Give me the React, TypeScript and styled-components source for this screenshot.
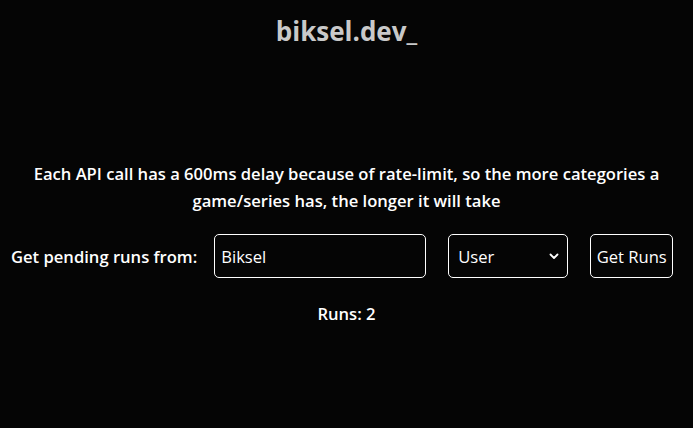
import React from "react";
import styled, { createGlobalStyle } from "styled-components";

const Global = createGlobalStyle`
  html, body { margin: 0; padding: 0; background: #050505; }
  body { font-family: "Open Sans", "Noto Sans", sans-serif; color: #ffffff; }
  * { box-sizing: border-box; }
`;

const Page = styled.div`
  width: 693px;
  height: 428px;
  background: #050505;
  display: flex;
  flex-direction: column;
  align-items: stretch;
`;

const Title = styled.h1`
  margin: 0;
  padding-top: 13px;
  height: 50px;
  text-align: center;
  font-size: 26px;
  font-weight: 700;
  color: #c9c9c9;
  line-height: 36px;
`;

const Note = styled.p`
  margin: 110px auto 0;
  width: 670px;
  text-align: center;
  font-size: 16.6px;
  font-weight: 600;
  line-height: 27px;
`;

const Row = styled.div`
  display: flex;
  align-items: center;
  margin-top: 20px;
  padding-left: 11px;
  height: 44px;
`;

const Label = styled.label`
  font-size: 16.6px;
  font-weight: 600;
  margin-right: 17px;
  white-space: nowrap;
`;

const Field = styled.input`
  width: 212px;
  height: 44px;
  background: #050505;
  color: #fff;
  border: 1px solid #ffffff;
  border-radius: 5px;
  padding: 0 6px;
  font: inherit;
  font-size: 16.6px;
  outline: none;
`;

const SelectWrap = styled.div`
  position: relative;
  margin-left: 22px;
  width: 120px;
  height: 44px;
`;

const Select = styled.select`
  appearance: none;
  width: 100%;
  height: 100%;
  background: #050505;
  color: #fff;
  border: 1px solid #ffffff;
  border-radius: 5px;
  padding: 0 9px;
  font: inherit;
  font-size: 16.6px;
  outline: none;
`;

const Chevron = styled.svg`
  position: absolute;
  right: 9px;
  top: 19px;
  pointer-events: none;
`;

const Button = styled.button`
  margin-left: 22px;
  width: 83px;
  height: 44px;
  background: #050505;
  color: #fff;
  border: 1px solid #ffffff;
  border-radius: 5px;
  padding: 0 4px;
  font: inherit;
  font-size: 16.6px;
  white-space: nowrap;
`;

const Runs = styled.div`
  margin-top: 24px;
  text-align: center;
  font-size: 16.6px;
  font-weight: 600;
`;

export default function App() {
  return (
    <Page>
      <Global />
      <Title>biksel.dev_</Title>
      <Note>
        Each API call has a 600ms delay because of rate-limit, so the more categories a game/series has, the longer it will take
      </Note>
      <Row>
        <Label>Get pending runs from:</Label>
        <Field defaultValue="Biksel" />
        <SelectWrap>
          <Select defaultValue="User">
            <option>User</option>
            <option>Game</option>
            <option>Series</option>
          </Select>
          <Chevron width="10" height="7" viewBox="0 0 10 7">
            <path d="M1.5 1.5 L5 5 L8.5 1.5" fill="none" stroke="#fff" strokeWidth="1.8" strokeLinecap="round" strokeLinejoin="round" />
          </Chevron>
        </SelectWrap>
        <Button>Get Runs</Button>
      </Row>
      <Runs>Runs: 2</Runs>
    </Page>
  );
}
